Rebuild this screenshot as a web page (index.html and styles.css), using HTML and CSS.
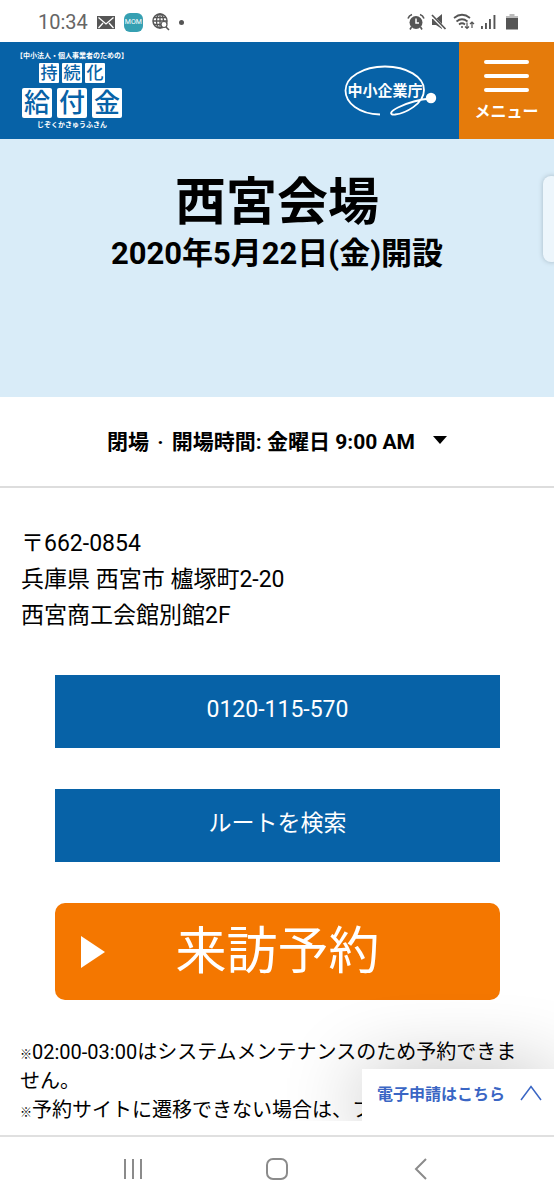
FILE: index.html
```html
<!DOCTYPE html>
<html lang="ja">
<head>
<meta charset="utf-8">
<meta name="viewport" content="width=device-width, initial-scale=1">
<title>西宮会場 - 持続化給付金</title>
<link rel="stylesheet" href="styles.css">
</head>
<body>
<div class="screen">
  <div class="status">
    <div class="status-left">
      <span class="clock">10:34</span>
      <svg class="mail" width="18" height="14" viewBox="0 0 18 14"><rect width="18" height="13" y="1" fill="#565656"/><path d="M1.5 2.5 9 9l7.500-6.500M1.500 13 6 8M16.500 13 12 8" fill="none" stroke="#fff" stroke-width="1.300"/></svg>
      <span class="mom">MOM</span>
      <svg width="18" height="18" viewBox="0 0 18 18" fill="none" stroke="#555"><circle cx="8" cy="8" r="7" stroke-width="1.500"/><ellipse cx="8" cy="8" rx="3.500" ry="7" stroke-width="1.300"/><path d="M8 1v14M1 8h14M2 4.500h12M2 11.500h12" stroke-width="1.300"/><circle cx="12" cy="11.500" r="3" fill="#fff" stroke-width="1.200"/><path d="m14 14 3 3" stroke-width="1.600"/></svg>
      <span class="dot"></span>
    </div>
    <div class="status-right">
      <svg width="18" height="18" viewBox="0 0 18 18"><circle cx="9" cy="9.500" r="6.500" fill="#555"/><path d="M9 5.500V10h3" fill="none" stroke="#fff" stroke-width="1.500"/><path d="M1 5.500Q2 2.500 5 1.500M17 5.500Q16 2.500 13 1.500M4.500 14 3 16.500M13.500 14l1.500 2.500" fill="none" stroke="#555" stroke-width="1.600"/></svg>
      <svg width="16" height="18" viewBox="0 0 16 18"><path d="M1 6h4l6-5v15l-6-4H1z" fill="#555"/><path d="M0 2 15 17" stroke="#fff" stroke-width="3"/><path d="m1 2 13.500 14" stroke="#555" stroke-width="1.700"/></svg>
      <svg width="22" height="18" viewBox="0 0 22 18" fill="none" stroke="#555" stroke-width="1.700"><path d="M1 5q8-6.500 16 0M3.500 8.500q5.500-4.500 11 0M6 11.500q3-2.500 6 0"/><circle cx="9" cy="14" r="1" fill="#555" stroke="none"/><path d="M14 9.500v6m-2-2 2 2 2-2M19 15V9m-2 2 2-2 2 2" stroke-width="1.200"/></svg>
      <svg width="15" height="16" viewBox="0 0 15 16" fill="#555"><path d="M0 12h1.900v3H0zM4 9h1.900v6H4zM8 5h1.900v10H8zM12.500 1h1.900v14h-1.900z"/></svg>
      <svg class="battery" width="12" height="18" viewBox="0 0 12 18"><path d="M3.500 1h5v2H12v3H0V3h3.500z" fill="#bbb"/><path d="M0 5h12v11.500H0z" fill="#555"/></svg>
    </div>
  </div>

  <header class="header">
    <a class="logo" href="#">
      <span class="logo-small">【中小法人・個人事業者のための】</span>
      <span class="tiles"><b>持</b><b>続</b><b>化</b></span>
      <span class="tiles tiles-big"><b>給</b><b>付</b><b>金</b></span>
      <span class="logo-small">じぞくかきゅうふきん</span>
    </a>
    <a class="agency" href="#">
      <svg width="94" height="52" viewBox="0 0 94 52" fill="none" stroke="#fff"><path d="M36 49.500C15 49 1.500 38 1.500 25.500 1.500 12 19 1.500 41 1.500S80 12 80 25c0 14-19 23.500-29 24.500-7 .5-4-3.500 3-7 10-5 20-8 33-9" stroke-width="1.800"/><circle cx="87" cy="33" r="5.200" fill="#fff" stroke="none"/><text class="agency-name" x="41" y="31" text-anchor="middle">中小企業庁</text></svg>
    </a>
    <button class="menu" type="button"><i></i><i></i><i></i><span>メニュー</span></button>
  </header>

  <main class="page">
    <section class="hero">
      <h1>西宮会場</h1>
      <h2>2020年5月22日(金)開設</h2>
      <span class="edge"></span>
    </section>
    <button class="hours" type="button"><span>閉場 <span class="sep">·</span> 開場時間: 金曜日 9:00 AM</span><svg width="14" height="12" viewBox="0 0 14 12"><path d="M0 0h14L7 8z" fill="#000"/></svg></button>
    <address class="address">〒662-0854<br>兵庫県 西宮市 櫨塚町2-20<br>西宮商工会館別館2F</address>
    <div class="actions">
      <a class="action" href="tel:0120115570">0120-115-570</a>
      <a class="action" href="#">ルートを検索</a>
      <a class="reserve" href="#"><svg width="24" height="32" viewBox="0 0 24 32"><path d="M0 0v32l24-16z" fill="#fff"/></svg><span>来訪予約</span></a>
    </div>
    <div class="notes">
      <p><span class="mark">※</span>02:00-03:00はシステムメンテナンスのため予約できません。</p>
      <p><span class="mark">※</span>予約サイトに遷移できない場合は、フ</p>
    </div>
    <a class="apply" href="#"><span>電子申請はこちら</span><svg width="22" height="16" viewBox="0 0 22 16"><path d="M1 15 11 1.500 21 15" fill="none" stroke="#3a66c4" stroke-width="1.500"/></svg></a>
  </main>

  <nav class="nav">
    <button type="button" aria-label="履歴"><svg width="22" height="24" viewBox="0 0 22 24"><path d="M3 2v20M11 2v20M19 2v20" stroke="#8b8b8b" stroke-width="2"/></svg></button>
    <button type="button" aria-label="ホーム"><svg width="24" height="24" viewBox="0 0 24 24"><rect x="2" y="2" width="20" height="20" rx="6" fill="none" stroke="#8b8b8b" stroke-width="2"/></svg></button>
    <button type="button" aria-label="戻る"><svg width="14" height="24" viewBox="0 0 14 24"><path d="M12 2 2 12l10 10" fill="none" stroke="#8b8b8b" stroke-width="2"/></svg></button>
  </nav>
</div>
</body>
</html>
```
FILE: styles.css
```css
* { box-sizing: border-box; }
body { margin: 0; background: #fff; color: #000; font-family: Roboto, "Noto Sans CJK JP", sans-serif; }
button { border: 0; padding: 0; background: none; color: inherit; font: inherit; }
a { color: inherit; text-decoration: none; }
svg { display: block; flex: none; }
h1, h2, p { margin: 0; }

.screen { display: flex; flex-direction: column; height: 100vh; overflow: hidden; }

.status { display: flex; justify-content: space-between; align-items: center; flex: none; height: 42px; padding: 2px 36px 0 38px; }
.status-left, .status-right { display: flex; align-items: center; }
.status-left { gap: 9px; }
.status-right { gap: 6px; }
.clock { font-size: 20px; line-height: 24px; color: #666; }
.mom { width: 19px; height: 19px; border-radius: 6px; background: #36a0b2; color: #fff; font-size: 7px; line-height: 19px; text-align: center; }
.dot { width: 5px; height: 5px; border-radius: 50%; background: #555; }
.battery { margin-left: 4px; }

.header { display: flex; align-items: stretch; flex: none; height: 97px; background: #0762a7; color: #fff; }
.logo { display: flex; flex-direction: column; align-items: center; width: 100px; margin: 9px auto 0 22px; }
.logo-small { font-size: 7px; font-weight: 700; line-height: 10px; white-space: nowrap; }
.tiles { display: flex; gap: 3px; margin: 2px 0 5px; }
.tiles b { width: 20px; height: 20px; border-radius: 1px; background: #fff; color: #0762a7; font-size: 17px; font-weight: 500; line-height: 20px; text-align: center; }
.tiles-big { gap: 5px; margin: 0 0 2px; }
.tiles-big b { width: 30px; height: 30px; border-radius: 2px; font-size: 26px; line-height: 30px; }
.agency { display: flex; align-items: center; margin-right: 21px; }
.agency-name { fill: #fff; stroke: none; font-size: 15px; font-weight: 700; }
.menu { display: flex; flex-direction: column; align-items: center; gap: 10px; width: 95px; padding-top: 18px; background: #e57b0b; }
.menu i { width: 45px; height: 4px; border-radius: 2px; background: #fff; }
.menu span { font-size: 16px; font-weight: 700; line-height: 20px; }

.page { position: relative; flex: 1; min-height: 0; margin-bottom: 14px; overflow: hidden; }
.hero { position: relative; height: 258px; padding-top: 32px; background: #d9ecf8; text-align: center; }
.hero h1 { font-size: 51px; line-height: 64px; }
.hero h2 { font-size: 31px; line-height: 38px; }
.edge { position: absolute; top: 37px; right: -6px; width: 17px; height: 86px; border-radius: 8px; background: #edf6fc; box-shadow: 0 0 5px #a5b8c4; }
.hours { display: flex; align-items: center; justify-content: center; gap: 18px; width: 100%; height: 91px; border-bottom: 2px solid #ddd; font-size: 21px; font-weight: 700; line-height: 30px; }
.sep { margin: 0 3px; }
.address { padding: 38px 21px 41px; font-size: 23px; font-style: normal; line-height: 36px; }
.actions { display: flex; flex-direction: column; gap: 41px; padding: 0 54px 0 55px; color: #fff; }
.action { height: 73px; background: #0762a7; font-size: 23px; line-height: 70px; text-align: center; }
.reserve { display: flex; align-items: center; height: 97px; padding: 0 26px; border-radius: 10px; background: #f47700; font-size: 51px; }
.reserve span { flex: 1; padding-right: 24px; text-align: center; line-height: 97px; }
.notes { padding: 38px 24px 0 20px; font-size: 20px; line-height: 29px; }
.mark { font-size: 12px; line-height: 12px; }
.apply { position: absolute; right: 0; bottom: 0; display: flex; align-items: center; justify-content: space-between; width: 192px; height: 52px; padding: 0 12px 4px 15px; background: #fff; box-shadow: 0 8px 80px rgba(0, 0, 0, 0.32); color: #3a66c4; font-size: 16px; font-weight: 700; }

.nav { display: flex; align-items: center; justify-content: center; gap: 96px; flex: none; height: 65px; border-top: 2px solid #e0e0e0; }
.nav button { display: flex; justify-content: center; width: 48px; }
```
